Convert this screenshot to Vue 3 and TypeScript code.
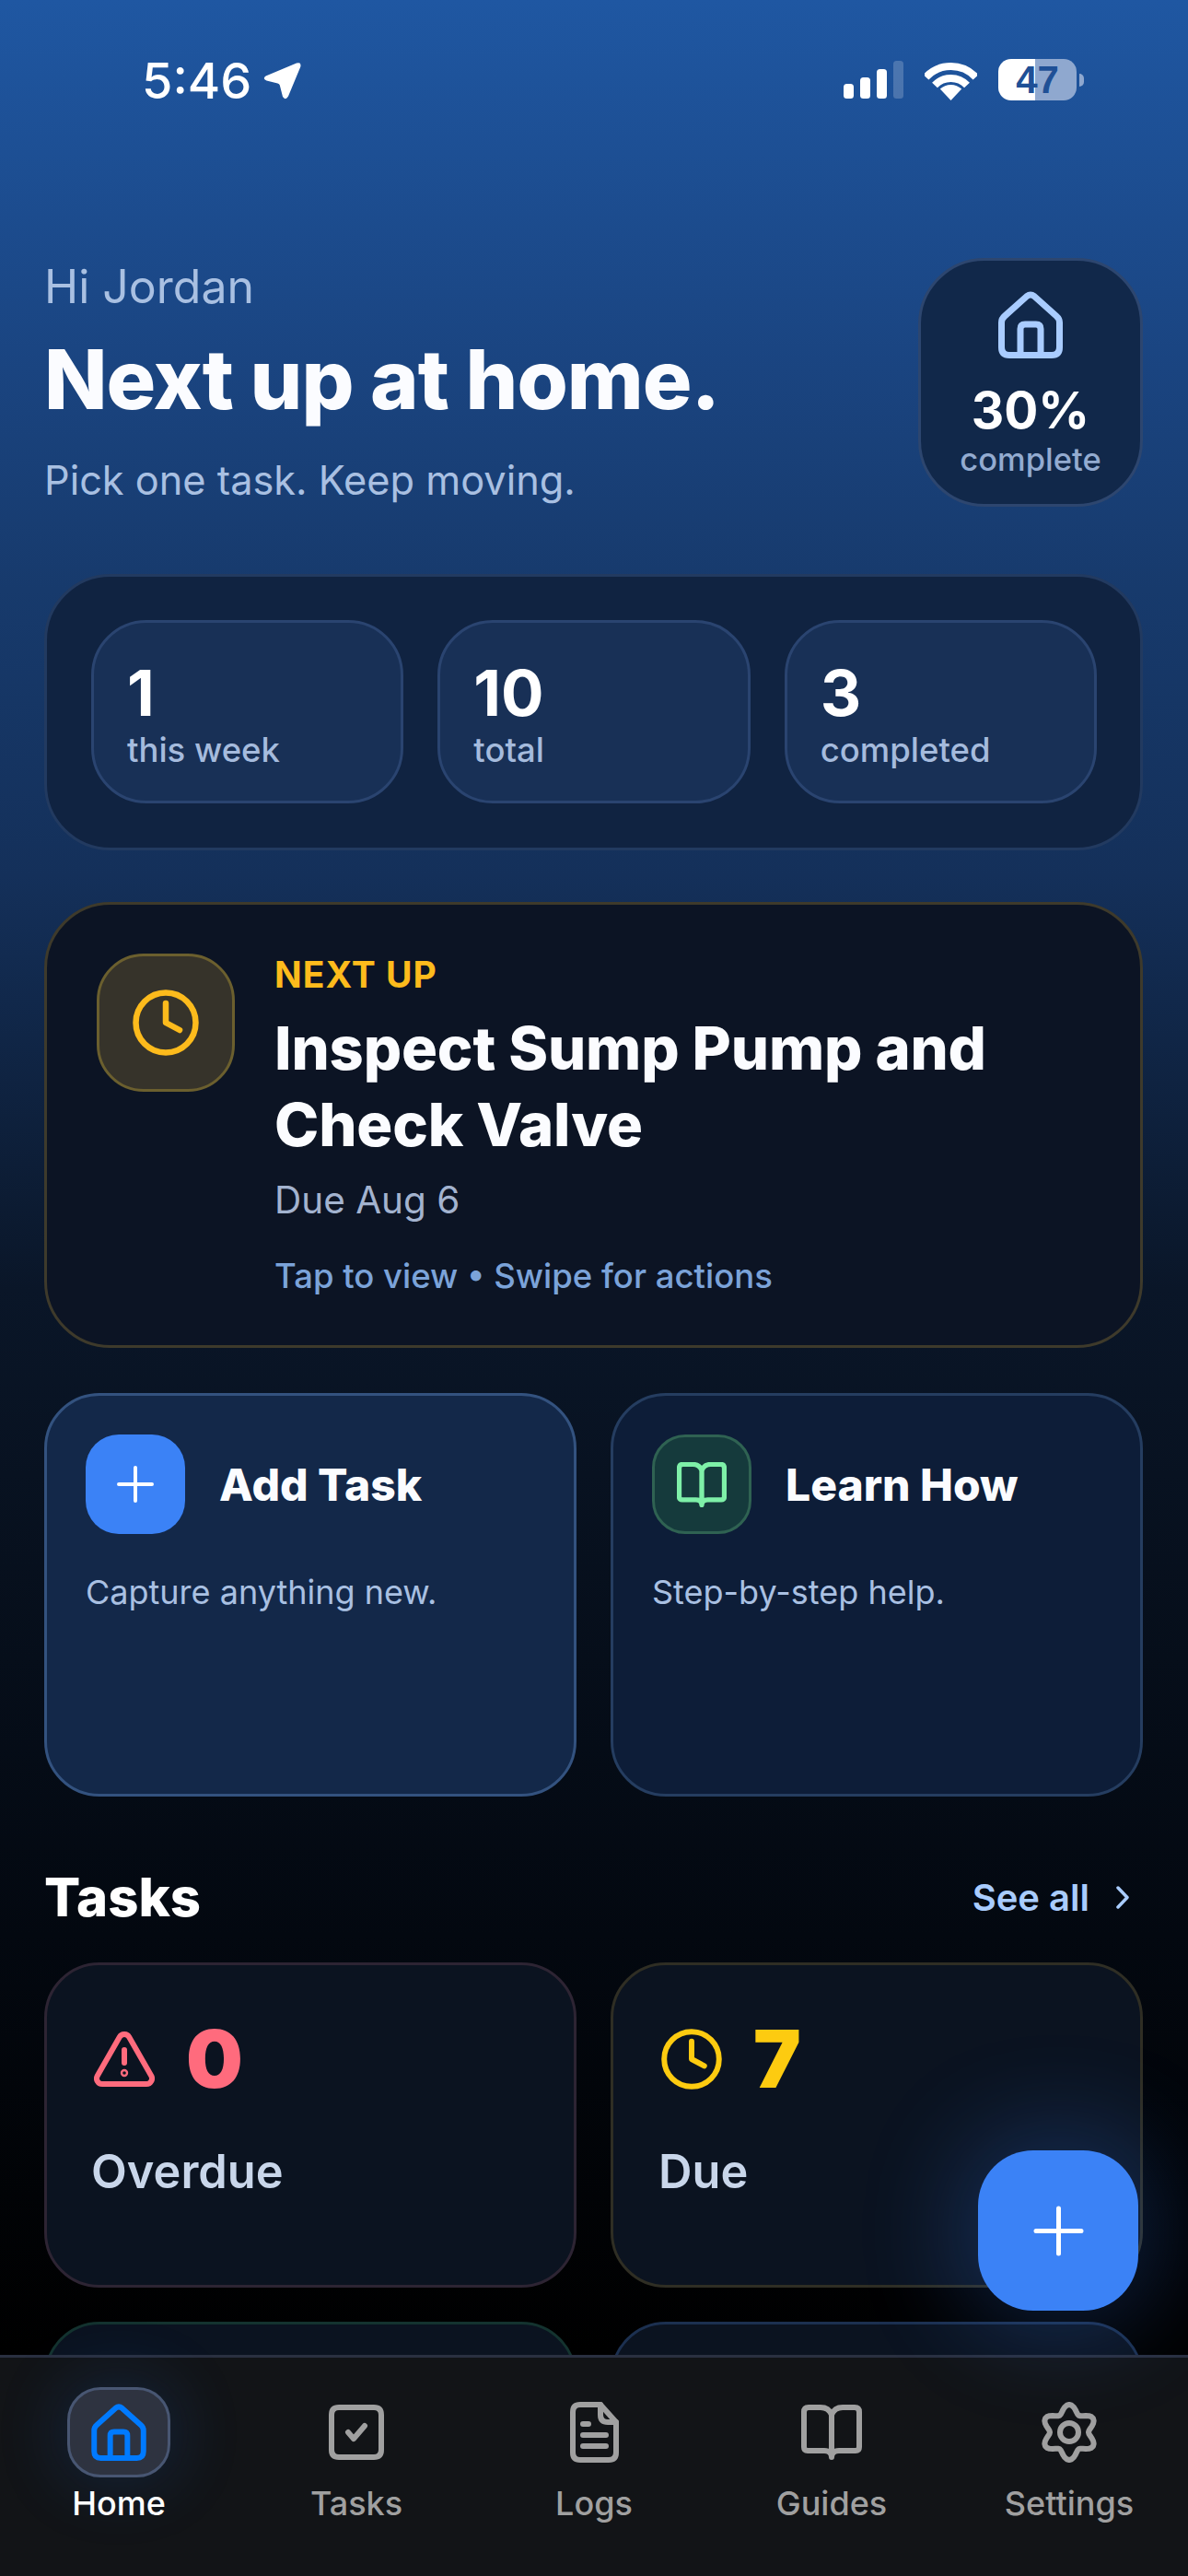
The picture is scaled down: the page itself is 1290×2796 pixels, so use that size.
<script setup lang="ts">
type IconPart = { d: string; fill?: boolean };
type Tab = { label: string; w: number; h: number; parts: IconPart[]; active?: boolean };

const homeParts: IconPart[] = [
  { d: 'M31 5.5Q35 2.5 39 5.5L63 27Q66.5 30 66.5 34V61Q66.5 69.5 58 69.5H12Q3.5 69.5 3.5 61V34Q3.5 30 7 27Z' },
  { d: 'M24 69V41Q24 36 29 36H41Q46 36 46 41V69' }
];
const bookParts: IconPart[] = [
  { d: 'M33 11Q30 3 21 3H8Q3 3 3 8V46Q3 50 7 50H25Q33 50 33 57Q33 50 41 50H59Q63 50 63 46V8Q63 3 58 3H45Q36 3 33 11V57' }
];

// six lobed outline, the stroke runs through the waist of the teeth
function gearPath(cx: number, cy: number): string {
  const points: string[] = [];
  for (let i = 0; i < 72; i++) {
    const a = (i / 72) * Math.PI * 2;
    const r = 25.5 + 4.5 * Math.cos(6 * a);
    const x = cx + r * Math.sin(a);
    const y = cy - r * Math.cos(a);
    points.push(`${x.toFixed(2)} ${y.toFixed(2)}`);
  }
  return `M${points.join('L')}Z`;
}

const tabs: Tab[] = [
  { label: 'Home', w: 60, h: 62, parts: homeParts, active: true },
  {
    label: 'Tasks',
    w: 60,
    h: 60,
    parts: [
      { d: 'M11 3H49Q57 3 57 11V49Q57 57 49 57H11Q3 57 3 49V11Q3 3 11 3Z' },
      { d: 'M21 30L27 37L39 23' }
    ]
  },
  {
    label: 'Logs',
    w: 53,
    h: 66,
    parts: [
      { d: 'M11 3H33L50 22V55Q50 63 42 63H11Q3 63 3 55V11Q3 3 11 3Z' },
      { d: 'M33 3V14Q33 22 41 22H50' },
      { d: 'M14 24H20M14 36H39M14 48H39' }
    ]
  },
  { label: 'Guides', w: 66, h: 60, parts: bookParts },
  {
    label: 'Settings',
    w: 60,
    h: 66,
    parts: [
      { d: gearPath(30, 33) },
      { d: 'M30 23A10 10 0 1 0 30 43A10 10 0 1 0 30 23Z' }
    ]
  }
];

const stats = [
  { value: '1', label: 'this week' },
  { value: '10', label: 'total' },
  { value: '3', label: 'completed' }
];
</script>

<template>
  <div class="page">
    <main class="scroll">
      <div class="status">
        <div class="status-left">
          <span class="time">5:46</span>
          <svg width="41" height="40" viewBox="0 0 41 40">
            <path fill="#fff" d="M36 .6Q41.5-1 40.3 4.4L27 36.5Q24 41.5 21 37L17.8 24.6Q17.3 22.8 15.5 22.4L3.4 19.5Q-1.4 17.5 2.6 14.5Z" />
          </svg>
        </div>
        <div class="status-right">
          <div class="signal">
            <i class="bar b1"></i><i class="bar b2"></i><i class="bar b3"></i><i class="bar b4"></i>
          </div>
          <svg width="57" height="41" viewBox="0 0 57 41">
            <path fill="none" stroke="#fff" stroke-width="8" d="M1.5 15.8A37 37 0 0 1 55.5 15.8" />
            <path fill="none" stroke="#fff" stroke-width="8" d="M11 24.6A24 24 0 0 1 46 24.6" />
            <path fill="#fff" d="M28.5 41L16.8 28.6A17 17 0 0 1 40.2 28.6Z" />
          </svg>
          <div class="battery">
            <div class="battery-body">47</div>
            <div class="battery-nub"></div>
          </div>
        </div>
      </div>

      <header class="hero">
        <div class="hero-text">
          <p class="hi">Hi Jordan</p>
          <h1>Next up at home.</h1>
          <p class="sub">Pick one task. Keep moving.</p>
        </div>
        <div class="progress">
          <svg width="70" height="73" viewBox="0 0 70 73" class="stroke-icon" stroke="#a9ccff">
            <path v-for="p in homeParts" :key="p.d" :d="p.d" stroke-width="7" />
          </svg>
          <div class="pct">30%</div>
          <div class="pct-label">complete</div>
        </div>
      </header>

      <section class="stats">
        <div v-for="s in stats" :key="s.label" class="stat">
          <div class="stat-value">{{ s.value }}</div>
          <div class="stat-label">{{ s.label }}</div>
        </div>
      </section>

      <section class="next">
        <div class="next-icon">
          <svg width="72" height="72" viewBox="0 0 72 72" class="stroke-icon" stroke="#fdbb1c" stroke-width="6.5">
            <circle cx="36" cy="36" r="32.5" />
            <path d="M36 15V36L51 44" />
          </svg>
        </div>
        <div class="next-body">
          <div class="eyebrow">NEXT UP</div>
          <h2>Inspect Sump Pump and Check Valve</h2>
          <div class="due">Due Aug 6</div>
          <div class="hint">Tap to view • Swipe for actions</div>
        </div>
      </section>

      <section class="actions">
        <div class="action primary">
          <div class="action-head">
            <div class="action-icon blue">
              <svg width="40" height="40" viewBox="0 0 40 40" class="stroke-icon" stroke="#fff" stroke-width="4">
                <path d="M20 2V38M2 20H38" />
              </svg>
            </div>
            <span>Add Task</span>
          </div>
          <p>Capture anything new.</p>
        </div>
        <div class="action">
          <div class="action-head">
            <div class="action-icon green">
              <svg width="54" height="49" viewBox="0 0 66 60" class="stroke-icon" stroke="#7ef0a8" stroke-width="6.5">
                <path v-for="p in bookParts" :key="p.d" :d="p.d" />
              </svg>
            </div>
            <span>Learn How</span>
          </div>
          <p>Step-by-step help.</p>
        </div>
      </section>

      <div class="section-head">
        <h3>Tasks</h3>
        <div class="see-all">
          See all
          <svg width="16" height="25" viewBox="0 0 16 25" class="stroke-icon" stroke="#a9ccff" stroke-width="3.5">
            <path d="M3 2L13 12.5L3 23" />
          </svg>
        </div>
      </div>

      <section class="task-grid">
        <div class="task overdue">
          <div class="task-top">
            <svg width="66" height="60" viewBox="0 0 66 60" class="stroke-icon" stroke="#ff6b7d" stroke-width="6">
              <path d="M27.8 6A6 6 0 0 1 38.2 6L62.2 48A6 6 0 0 1 57 57H9A6 6 0 0 1 3.800 48Z" />
              <path d="M33 20V34" />
              <circle cx="33" cy="45" r="1.200" />
            </svg>
            <span class="count">0</span>
          </div>
          <div class="task-label">Overdue</div>
        </div>
        <div class="task due-card">
          <div class="task-top">
            <svg width="66" height="66" viewBox="0 0 72 72" class="stroke-icon" stroke="#fdcb10" stroke-width="6.500">
              <circle cx="36" cy="36" r="32.500" />
              <path d="M36 15V36L51 44" />
            </svg>
            <span class="count">7</span>
          </div>
          <div class="task-label">Due</div>
        </div>
        <div class="task green-card"></div>
        <div class="task blue-card"></div>
      </section>
    </main>

    <nav class="tabbar">
      <div v-for="t in tabs" :key="t.label" class="tab" :class="{ active: t.active }">
        <div class="tab-icon">
          <svg :width="t.w" :height="t.h" :viewBox="`0 0 ${t.label === 'Home' ? '70 73' : t.w + ' ' + t.h}`" class="stroke-icon" :stroke-width="t.label === 'Home' ? 7 : 6">
            <path v-for="p in t.parts" :key="p.d" :d="p.d" />
          </svg>
        </div>
        <span>{{ t.label }}</span>
      </div>
    </nav>

    <button class="fab" aria-label="Add">
      <svg width="55" height="55" viewBox="0 0 55 55" class="stroke-icon" stroke="#fff" stroke-width="5">
        <path d="M27.500 3V52M3 27.500H52" />
      </svg>
    </button>
  </div>
</template>

<style scoped>
.page {
  position: relative;
  width: 1290px;
  height: 2796px;
  display: flex;
  flex-direction: column;
  overflow: hidden;
  font-family: Inter, "Liberation Sans", sans-serif;
  color: #fff;
  background: linear-gradient(180deg, #1f57a2 0, #1a4480 400px, #173a6c 640px, #14305a 950px, #0a1628 1400px, #060e1a 1800px, #030810 2100px, #000 2550px);
}

.scroll {
  flex: 1;
  min-height: 0;
  overflow: hidden;
  padding: 0 49px 0 48px;
}

.stroke-icon {
  fill: none;
  stroke-linecap: round;
  stroke-linejoin: round;
  display: block;
}

.status {
  box-sizing: border-box;
  height: 280px;
  display: flex;
  justify-content: space-between;
  align-items: flex-start;
  padding: 64px 64px 0 106px;
}

.status-left {
  display: flex;
  align-items: center;
  gap: 13px;
}

.time {
  font-size: 54px;
  line-height: 48px;
  font-weight: 500;
}

.status-right {
  display: flex;
  align-items: flex-end;
  gap: 23px;
}

.signal {
  display: flex;
  align-items: flex-end;
  gap: 7px;
  height: 41px;
  margin-bottom: 2px;
}

.bar {
  display: block;
  width: 11px;
  border-radius: 3.500px;
  background: #fff;
}

.b1 { height: 16px; }
.b2 { height: 23px; }
.b3 { height: 32px; }
.b4 { height: 41px; background: rgba(255, 255, 255, 0.2); }

.battery {
  display: flex;
  align-items: center;
  gap: 3px;
}

.battery-body {
  width: 85px;
  height: 45px;
  border-radius: 14px;
  background: linear-gradient(90deg, #fff 40px, #8fa8cf 40px);
  color: #1f5096;
  font-family: "Liberation Sans", sans-serif;
  font-weight: 700;
  font-size: 42px;
  line-height: 45px;
  text-align: center;
}

.battery-nub {
  width: 5px;
  height: 14px;
  border-radius: 0 7px 7px 0;
  background: #8fa8cf;
}

.hero {
  height: 270px;
  display: flex;
  justify-content: space-between;
  align-items: flex-start;
}

.hero-text {
  padding-top: 2px;
}

.hi {
  margin: 0;
  font-size: 50px;
  line-height: 58px;
  color: #a9c0e2;
}

h1 {
  margin: 19px 0 0;
  font-size: 89.500px;
  line-height: 106px;
  font-weight: 800;
  letter-spacing: -1px;
  color: #fbfcff;
}

.sub {
  margin: 29px 0 0;
  font-size: 43.300px;
  line-height: 54px;
  color: #a9c0e2;
}

.progress {
  width: 244px;
  height: 270px;
  box-sizing: border-box;
  border: 3px solid #2d466f;
  border-radius: 72px;
  background: #11284a;
  display: flex;
  flex-direction: column;
  align-items: center;
  padding-top: 33px;
}

.pct {
  margin-top: 25px;
  font-size: 55px;
  line-height: 62px;
  font-weight: 700;
}

.pct-label {
  margin-top: 2px;
  font-size: 34.500px;
  line-height: 42px;
  font-weight: 500;
  color: #93abd0;
}

.stats {
  margin-top: 73px;
  height: 300px;
  box-sizing: border-box;
  border: 3px solid #223a60;
  border-radius: 72px;
  background: #102341;
  padding: 47px 47px 47px 48px;
  display: grid;
  grid-template-columns: repeat(3, 1fr);
  gap: 37px;
}

.stat {
  box-sizing: border-box;
  height: 199px;
  border: 3px solid #2a4470;
  border-radius: 60px;
  background: #183056;
  padding: 36px 36px 0;
}

.stat-value {
  font-size: 69px;
  line-height: 80px;
  font-weight: 700;
}

.stat-label {
  font-size: 36.500px;
  line-height: 44px;
  font-weight: 500;
  color: #a5bbdd;
}

.next {
  margin-top: 56px;
  height: 484px;
  box-sizing: border-box;
  border: 3px solid #3e3a2b;
  border-radius: 72px;
  background: #0c1424;
  padding: 53px 53px 53px 54px;
  display: flex;
  gap: 43px;
}

.next-icon {
  flex: none;
  box-sizing: border-box;
  width: 150px;
  height: 150px;
  border: 3px solid #6b5f2e;
  border-radius: 51px;
  background: #36332a;
  display: flex;
  align-items: center;
  justify-content: center;
}

.next-body {
  min-width: 0;
  flex: 1;
}

.eyebrow {
  font-size: 39px;
  line-height: 46px;
  font-weight: 700;
  letter-spacing: 1px;
  color: #fdbb1c;
}

h2 {
  margin: 15px 0 0;
  font-size: 65px;
  line-height: 83px;
  font-weight: 800;
  letter-spacing: -0.150px;
  color: #fbfcff;
}

.due {
  margin-top: 14px;
  font-size: 40.500px;
  line-height: 54px;
  color: #a3b3cf;
}

.hint {
  margin-top: 31px;
  font-size: 36.500px;
  line-height: 48px;
  font-weight: 500;
  color: #7ba3d9;
}

.actions {
  margin-top: 49px;
  display: grid;
  grid-template-columns: 578px 578px;
  gap: 37px;
}

.action {
  box-sizing: border-box;
  height: 438px;
  border: 3px solid #253d60;
  border-radius: 60px;
  background: #0d1d38;
  padding: 42px;
}

.action.primary {
  border-color: #33527f;
  background: #132849;
}

.action-head {
  display: flex;
  align-items: center;
  gap: 37px;
  font-size: 48px;
  font-weight: 800;
  color: #fbfcff;
}

.action-icon {
  flex: none;
  box-sizing: border-box;
  width: 108px;
  height: 108px;
  border-radius: 36px;
  display: flex;
  align-items: center;
  justify-content: center;
}

.action-icon.blue {
  background: #3b82f6;
}

.action-icon.green {
  border: 3px solid #2f6252;
  background: #153a3c;
}

.action p {
  margin: 39px 0 0;
  font-size: 36px;
  line-height: 48px;
  color: #a9c0e2;
}

.section-head {
  margin-top: 76px;
  height: 66px;
  display: flex;
  align-items: center;
  justify-content: space-between;
}

h3 {
  margin: 0;
  font-size: 58px;
  font-weight: 800;
}

.see-all {
  display: flex;
  align-items: center;
  gap: 28px;
  padding-right: 14px;
  font-size: 40px;
  font-weight: 600;
  color: #a9ccff;
}

.task-grid {
  margin-top: 38px;
  display: grid;
  grid-template-columns: 578px 578px;
  gap: 37px;
}

.task {
  box-sizing: border-box;
  height: 353px;
  border: 3px solid #2d2433;
  border-radius: 60px;
  background: #0b1320;
  padding: 69px 48px 0;
}

.task.due-card {
  border-color: #2f2e24;
  padding-left: 49px;
}
.task.green-card { border-color: #14332f; }
.task.blue-card { border-color: #1c3050; }

.task-top {
  display: flex;
  align-items: center;
  gap: 34px;
  height: 66px;
  margin-left: 3px;
}

.count {
  font-size: 87px;
  line-height: 66px;
  font-weight: 900;
  color: #ff6b7d;
}

.due-card .count {
  color: #fdcb10;
}

.task-label {
  margin-top: 58px;
  font-size: 50.500px;
  line-height: 62px;
  font-weight: 600;
  color: #c9d6ea;
}

.tabbar {
  flex: none;
  height: 240px;
  box-sizing: border-box;
  border-top: 3px solid #2a3040;
  background: #121417;
  display: grid;
  grid-template-columns: repeat(5, 258px);
  padding-top: 32px;
}

.tab {
  display: flex;
  flex-direction: column;
  align-items: center;
  font-size: 36px;
  line-height: 44px;
  font-weight: 500;
  color: #a0a0a0;
  stroke: #a0a0a0;
}

.tab-icon {
  box-sizing: border-box;
  width: 112px;
  height: 98px;
  margin-bottom: 6px;
  border: 3px solid transparent;
  border-radius: 36px;
  display: flex;
  align-items: center;
  justify-content: center;
}

.tab.active {
  color: #fff;
  stroke: #007aff;
}

.tab.active .tab-icon {
  border-color: #485672;
  background: #2e3340;
  box-shadow: 0 0 70px 10px rgba(40, 110, 220, 0.16);
}

.fab {
  position: absolute;
  left: 1062px;
  top: 2334px;
  width: 174px;
  height: 174px;
  border: 0;
  padding: 0;
  border-radius: 60px;
  background: #3b82f6;
  box-shadow: 0 0 110px 20px rgba(59, 130, 246, 0.24);
  display: flex;
  align-items: center;
  justify-content: center;
}
</style>

<style>
html,
body {
  margin: 0;
  background: #000;
}
</style>
